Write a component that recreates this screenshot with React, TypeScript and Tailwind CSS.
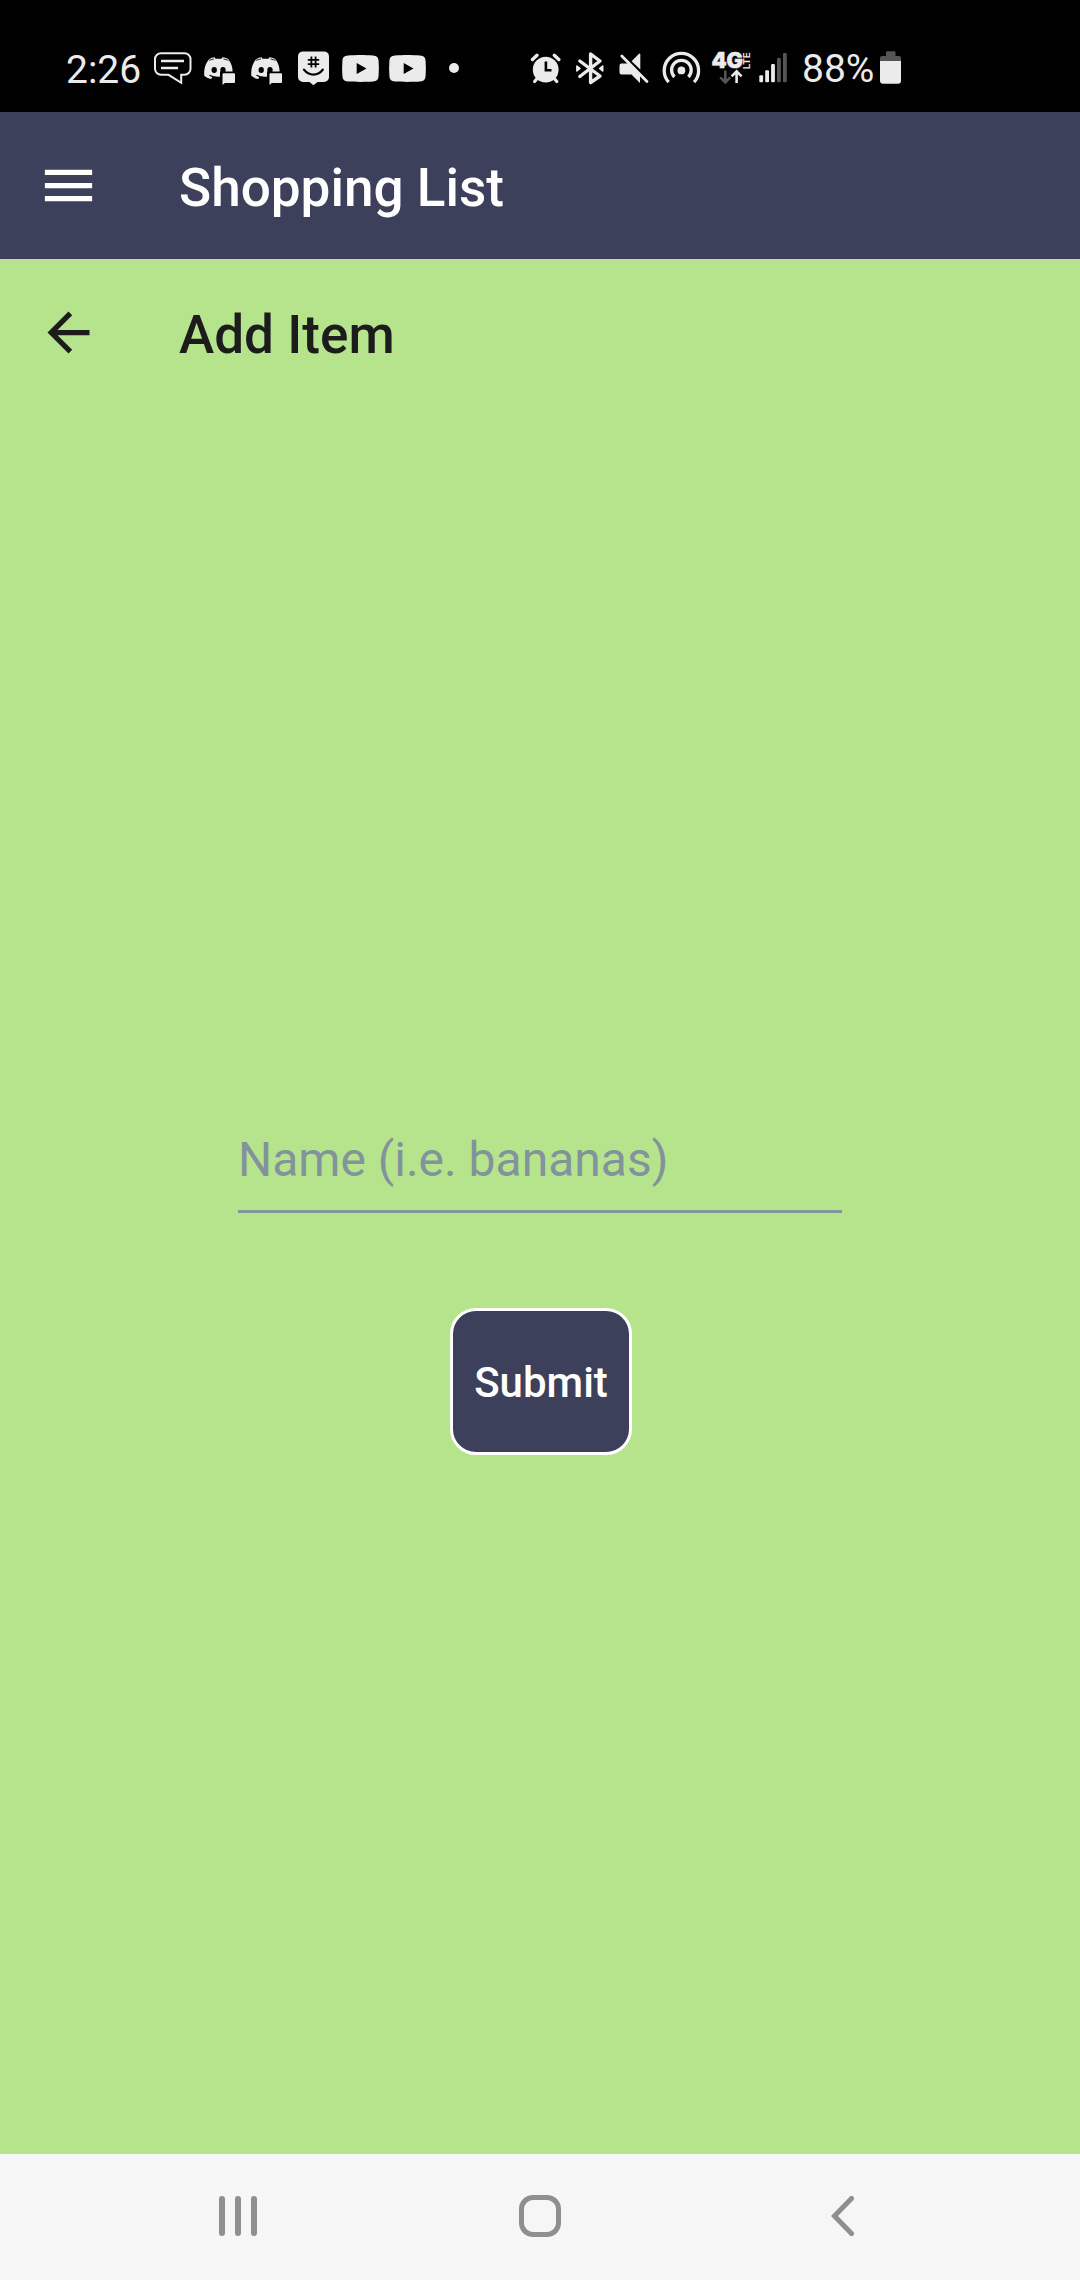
import React from "react";

const LIGHT = "#ebebeb";
const DIM = "#555555";

function MessageIcon() {
  return (
    <svg className="ml-[12px] h-9 w-[39px] shrink-0" viewBox="153 50 39 36" fill="none" stroke={LIGHT} strokeWidth="2">
      <path d="M161 53.2h23.5a6 6 0 0 1 6 6v9.6a6 6 0 0 1-6 6h-3.3v8l-12.700-8H161a6 6 0 0 1-6-6v-9.600a6 6 0 0 1 6-6z" />
      <path d="M161 61h23M161 68h17" strokeWidth="2.4" />
    </svg>
  );
}

function DiscordIcon({ className }: { className: string }) {
  return (
    <svg className={className} viewBox="203 50 34 36" fill={LIGHT}>
      <path d="M209 59.200C211 58 213 57.600 214.600 57.300L215.500 58.700H221.500L222.400 57.300C225 57.700 227 58.400 228.500 59.300C231.500 63.500 232.700 67.500 232.600 72V77L222 80L213 77.600L210.500 79C208 78.300 206 77.300 204.300 75.800C203.700 69 205.500 63.500 209 59.200Z" />
      <ellipse cx="214.200" cy="70" rx="2.700" ry="3" fill="#000" />
      <ellipse cx="223" cy="70" rx="2.700" ry="3" fill="#000" />
      <path d="M220 71.600H237V86H220V80L212 78V76.500L220 77.500Z" fill="#000" />
      <path d="M209.500 75.200C213 77.300 217 77.800 221 77.200" stroke="#000" strokeWidth="1.300" fill="none" />
      <path d="M209 60.300L214 58.900M228.500 60.300L223.500 58.900" stroke="#000" strokeWidth="0.800" />
      <path d="M223.500 73.300H234a1 1 0 0 1 1 1V82a1 1 0 0 1-1 1H224.800L222.500 85V74.300a1 1 0 0 1 1-1z" />
    </svg>
  );
}

function GroupMeIcon() {
  return (
    <svg className="ml-[14px] h-9 w-[31px] shrink-0" viewBox="298 50 31 36" fill="none">
      <path d="M303 51.400h21a5 5 0 0 1 5 5V77a5 5 0 0 1-5 5h-6.500L313.400 85.300 309.500 82H303a5 5 0 0 1-5-5V56.400a5 5 0 0 1 5-5z" fill={LIGHT} />
      <path d="M311.400 56.500v11M315.600 56.500v11M307.800 59.900h11.400M307.800 64.100h11.400" stroke="#000" strokeWidth="1.800" />
      <path d="M304 69.600C309 76.200 318 76.200 322.800 69.600" stroke="#000" strokeWidth="2.300" strokeLinecap="round" />
    </svg>
  );
}

function YouTubeIcon({ className }: { className: string }) {
  return (
    <svg className={className} viewBox="342 50 37 36">
      <path d="M348 55.500C355 54.800 366 54.800 373 55.500C377 55.800 378.300 57.500 378.600 61C379 66 379 71 378.600 75.800C378.300 79.500 377 81.200 373 81.500C366 82 355 82 348 81.500C344 81.200 342.700 79.500 342.400 75.800C342 71 342 66 342.400 61C342.700 57.500 344 55.800 348 55.500Z" fill={LIGHT} />
      <path d="M356.700 63L366.500 68.500L356.700 74Z" fill="#000" />
    </svg>
  );
}

function AlarmIcon() {
  return (
    <svg className="ml-[71px] h-9 w-[31px] shrink-0" viewBox="530 50 31 36" fill="none" stroke={LIGHT}>
      <circle cx="545.700" cy="69.700" r="12.900" fill={LIGHT} stroke="none" />
      <path d="M532.500 59.500L537 55.300M558.800 59.500L554.300 55.300" strokeWidth="3.400" strokeLinecap="round" />
      <path d="M534.600 81.500L538 77.500M556.800 81.500L553.400 77.500" strokeWidth="3.200" strokeLinecap="round" />
      <path d="M545.900 61.500V70.300H551.500" stroke="#000" strokeWidth="2.600" />
    </svg>
  );
}

function BluetoothIcon() {
  return (
    <svg className="ml-[14px] h-9 w-[29px] shrink-0" viewBox="575 50 29 36" fill="none" stroke={LIGHT} strokeWidth="3.400" strokeLinejoin="round" strokeLinecap="round">
      <path d="M579.800 61L600 76L590.600 82.600V54L600 61L579.800 76.500" />
      <path d="M576.900 66L580 68.500L576.900 71ZM602.700 66L599.600 68.500L602.700 71Z" fill={LIGHT} strokeWidth="1.600" />
    </svg>
  );
}

function MuteIcon() {
  return (
    <svg className="ml-[14px] h-9 w-[31px] shrink-0" viewBox="618 50 31 36" fill={LIGHT}>
      <path d="M621.500 63.500H629L640 74V83L631.500 74.500H621.500a2 2 0 0 1-2-2V65.500a2 2 0 0 1 2-2z" />
      <path d="M631.600 61.300L639 53.800Q640.300 53 640.300 54.500V69.600Z" />
      <path d="M621.800 56L647 81.400" stroke={LIGHT} strokeWidth="2.800" strokeLinecap="round" />
    </svg>
  );
}

function HotspotIcon() {
  return (
    <svg className="ml-[13px] h-9 w-[39px] shrink-0" viewBox="662 50 39 36" fill="none" stroke={LIGHT} strokeWidth="3.300">
      <circle cx="681.400" cy="70.400" r="3.900" fill={LIGHT} stroke="none" />
      <path d="M668.700 82.200A17.200 17.200 0 1 1 694.100 82.200" />
      <path d="M674.400 77A9.800 9.800 0 1 1 688.400 77" />
    </svg>
  );
}

function NetworkIcon() {
  return (
    <svg className="ml-[10px] h-9 w-[41px] shrink-0 overflow-visible" viewBox="711 50 41 36" fontFamily="Inter, sans-serif">
      <text x="711.400" y="68.300" fontSize="21" fontWeight="900" fill={LIGHT} stroke={LIGHT} strokeWidth="0.500" textLength="31.500" lengthAdjust="spacingAndGlyphs">4G</text>
      <text transform="translate(750.400 69.300) rotate(-90)" fontSize="8.800" fontWeight="700" fill={LIGHT} textLength="17" lengthAdjust="spacingAndGlyphs">LTE</text>
      <g fill="none" strokeWidth="2.600">
        <path d="M725.300 70.500V82.500M720.300 77.300L725.300 82.300L730.300 77.300" stroke={DIM} />
        <path d="M736.600 83V71.500M731.600 76.300L736.600 71.300L741.600 76.300" stroke={LIGHT} />
      </g>
    </svg>
  );
}

function SignalIcon() {
  return (
    <svg className="ml-[7px] h-9 w-[28px] shrink-0" viewBox="759 50 28 36">
      <g fill={LIGHT}>
        <rect x="759.300" y="75.300" width="3.800" height="6.900" rx="1" />
        <rect x="765.200" y="70.200" width="3.800" height="12" rx="1" />
        <rect x="771.100" y="64" width="3.800" height="18.200" rx="1" />
      </g>
      <g fill={DIM}>
        <rect x="777" y="58" width="3.800" height="24.200" rx="1" />
        <rect x="783" y="53" width="3.800" height="29.200" rx="1" />
      </g>
    </svg>
  );
}

function BatteryIcon() {
  return (
    <svg className="h-9 w-[21px] shrink-0" viewBox="880 50 21 36">
      <path d="M887 51.300h7.500a1 1 0 0 1 1 1V56h3.500a2 2 0 0 1 2 2v4h-21v-4a2 2 0 0 1 2-2h4v-3.700a1 1 0 0 1 1-1z" fill={DIM} />
      <path d="M880 61h21v19.800a3 3 0 0 1-3 3h-15a3 3 0 0 1-3-3z" fill={LIGHT} />
    </svg>
  );
}

function StatusBar() {
  return (
    <div className="flex h-[112px] shrink-0 items-center bg-black pt-6 pl-[66px] text-[39px] leading-9 text-[#ebebeb]">
      <span className="w-[75px] shrink-0 pt-[3px] whitespace-nowrap">2:26</span>
      <MessageIcon />
      <DiscordIcon className="ml-[11px] h-9 w-[34px] shrink-0" />
      <DiscordIcon className="ml-[13px] h-9 w-[34px] shrink-0" />
      <GroupMeIcon />
      <YouTubeIcon className="ml-[13px] h-9 w-[37px] shrink-0" />
      <YouTubeIcon className="ml-[10px] h-9 w-[37px] shrink-0" />
      <span className="ml-[23px] size-[10px] shrink-0 rounded-full bg-[#ebebeb]" />
      <AlarmIcon />
      <BluetoothIcon />
      <MuteIcon />
      <HotspotIcon />
      <NetworkIcon />
      <SignalIcon />
      <span className="ml-[15px] w-[78px] shrink-0 pt-[2px] whitespace-nowrap">88%</span>
      <BatteryIcon />
    </div>
  );
}

function Toolbar({ title, className, icon }: { title: string; className: string; icon: string }) {
  return (
    <header className={className}>
      <svg className="size-[63px] shrink-0" viewBox="0 0 24 24" fill="currentColor">
        <path d={icon} />
      </svg>
      <h1 className="ml-[79px] pt-[7px] text-[53.1px] font-medium">{title}</h1>
    </header>
  );
}

function NavigationBar() {
  return (
    <nav className="flex h-[126px] shrink-0 items-center bg-[#f6f6f6] pb-[2px] pl-[219px]">
      <div className="flex gap-[10px]">
        <span className="h-10 w-[6px] rounded-full bg-[#8f8f8f]" />
        <span className="h-10 w-[6px] rounded-full bg-[#8f8f8f]" />
        <span className="h-10 w-[6px] rounded-full bg-[#8f8f8f]" />
      </div>
      <span className="ml-[262px] size-[42px] rounded-[14px] border-5 border-[#8f8f8f]" />
      <svg className="ml-[270px] h-[42px] w-6" viewBox="0 0 24 42" fill="none" stroke="#8f8f8f" strokeWidth="5" strokeLinecap="round">
        <path d="M20.500 3.500L3.500 21L20.500 38.500" />
      </svg>
    </nav>
  );
}

export default function App() {
  return (
    <div className="flex h-[2280px] w-[1080px] flex-col overflow-hidden bg-[#b5e48c] font-['Roboto',sans-serif]">
      <StatusBar />
      <Toolbar
        title="Shopping List"
        icon="M3 18h18v-2H3v2zm0-5h18v-2H3v2zm0-7v2h18V6H3z"
        className="flex h-[147px] shrink-0 items-center bg-[#3d405b] pl-[37px] text-white"
      />
      <Toolbar
        title="Add Item"
        icon="M20 11H7.830l5.590-5.590L12 4l-8 8 8 8 1.410-1.410L7.830 13H20v-2z"
        className="flex h-[147px] shrink-0 items-center pl-[37px] text-[#1c1c1c]"
      />
      <main className="flex grow flex-col items-center border-t-3 border-[#b5e492] pt-[708px]">
        <input
          className="h-24 w-[604px] border-b-3 border-[#83939b] bg-transparent pb-2 text-[48px] text-[#3d405b] outline-none placeholder:text-[#83939b] placeholder:opacity-100"
          placeholder="Name (i.e. bananas)"
        />
        <button className="mt-[95px] ml-[2px] flex h-[147px] w-[182px] items-center justify-center rounded-[26px] border-3 border-white bg-[#3d405b] pt-[2px] text-[42px] font-medium text-white">
          Submit
        </button>
      </main>
      <NavigationBar />
    </div>
  );
}
